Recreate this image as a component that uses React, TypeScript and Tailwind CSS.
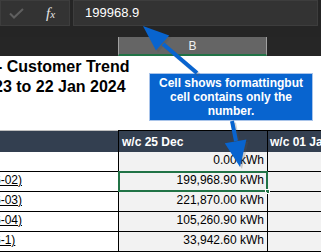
import { Fragment } from 'react';

const rows = [
  { label: '', value: '0.00 kWh' },
  { label: '6-02)', value: '199,968.90 kWh', selected: true },
  { label: '6-03)', value: '221,870.00 kWh' },
  { label: '6-04)', value: '105,260.90 kWh' },
  { label: '6-1)', value: '33,942.60 kWh' },
];

function Arrows() {
  return (
    <svg className="absolute left-0 top-0 pointer-events-none" width="321" height="252" viewBox="0 0 321 252">
      {/* shadows */}
      <g opacity="0.25" fill="#555" stroke="#555">
        <line x1="199" y1="75" x2="165" y2="46" strokeWidth="4" />
        <polygon points="145,28 171.2,37.6 158,52.6" strokeWidth="0" />
        <line x1="234" y1="123" x2="238" y2="143" strokeWidth="4" />
        <polygon points="242,169 248.4,141.5 226.8,145.3" strokeWidth="0" />
      </g>
      {/* arrow to formula bar */}
      <line x1="197" y1="73" x2="163" y2="44" stroke="#0864cf" strokeWidth="4" />
      <polygon points="143,26 169.2,35.6 156,50.6" fill="#0864cf" />
      {/* arrow to cell */}
      <line x1="232" y1="121" x2="236" y2="141" stroke="#0864cf" strokeWidth="4" />
      <polygon points="240,167 246.4,139.5 224.8,143.3" fill="#0864cf" />
    </svg>
  );
}

export default function App() {
  return (
    <div className="relative w-[321px] h-[252px] overflow-hidden bg-white font-['Liberation_Sans',Arial,sans-serif]">
      {/* Formula bar */}
      <div className="h-[27px] bg-[#252525] flex gap-[3px]">
        <div className="w-[70px] h-[26px] bg-[#333333] border border-[#3d3d3d] flex items-center">
          <svg className="ml-[8px]" width="15" height="11" viewBox="0 0 15 11">
            <path d="M1 5.5 L5 9.5 L14 1" fill="none" stroke="#5f5f5f" strokeWidth="2" />
          </svg>
          <span className="ml-[22px] text-[#e6e6e6] italic font-['Liberation_Serif',serif] text-[15px] leading-none">
            f<span className="text-[11px]">x</span>
          </span>
        </div>
        <div className="flex-1 mr-[3px] h-[26px] bg-[#333333] border border-[#3d3d3d] flex items-center pl-[11px]">
          <span className="text-white text-[13px]">199968.9</span>
        </div>
      </div>
      <div className="h-[10px] bg-[#252525]" />

      {/* Column headers */}
      <div className="h-[19px] bg-[#262626] flex">
        <div className="w-[118px]" />
        <div className="w-[149px] bg-[#656565] border-x border-[#a0a0a0] border-b-2 border-b-[#217346] flex items-center justify-center">
          <span className="text-[#f0f0f0] text-[12px] leading-none">B</span>
        </div>
      </div>

      {/* Title */}
      <div className="h-[74px] pt-[1px] font-bold text-[16px] leading-[20px] text-black">
        <div className="-ml-[3px] whitespace-nowrap">- Customer Trend</div>
        <div className="-ml-[6px] whitespace-nowrap">23 to 22 Jan 2024</div>
      </div>

      {/* Table */}
      <div className="grid grid-cols-[118px_149px_54px] text-[12px]">
        <div className="h-[22px] border-t border-[#bfbfbf] bg-[#333f50]" />
        <div className="h-[22px] border-t border-[#bfbfbf] bg-[#333f50] border-l border-black flex items-center pl-[3px] text-white font-bold whitespace-nowrap">
          w/c 25 Dec
        </div>
        <div className="h-[22px] border-t border-[#bfbfbf] bg-[#333f50] border-l border-black flex items-center pl-[2px] text-white font-bold whitespace-nowrap overflow-hidden">
          w/c 01 Jan
        </div>
        {rows.map((r, i) => (
          <Fragment key={i}>
            <div className="h-[20px] border-b border-black bg-white flex items-end pb-[2px] overflow-hidden whitespace-nowrap">
              {r.label && <span className="-ml-[6px] underline text-black">{r.label}</span>}
            </div>
            <div className="relative h-[20px] border-b border-l border-black bg-[#f2f2f2] flex items-end justify-end pb-[2px] pr-[3px] text-black whitespace-nowrap">
              {r.value}
              {r.selected && (
                <>
                  <div className="absolute -left-[1px] -top-[1px] -right-[1px] -bottom-[1px] border-2 border-[#217346]" />
                  <div className="absolute -right-[3px] -bottom-[3px] w-[5px] h-[5px] bg-[#217346] border border-white" />
                </>
              )}
            </div>
            <div className="h-[20px] border-b border-l border-black bg-[#f2f2f2]" />
          </Fragment>
        ))}
      </div>

      {/* Callout */}
      <div className="absolute left-[149px] top-[73px] w-[164px] h-[48px] bg-[#0864cf] border border-[#a9c4ea] flex flex-col items-center justify-center text-white font-bold text-[12px] leading-[14px] text-center">
        <div>Cell shows formattingbut</div>
        <div>cell contains only the</div>
        <div>number.</div>
      </div>

      <Arrows />
    </div>
  );
}
